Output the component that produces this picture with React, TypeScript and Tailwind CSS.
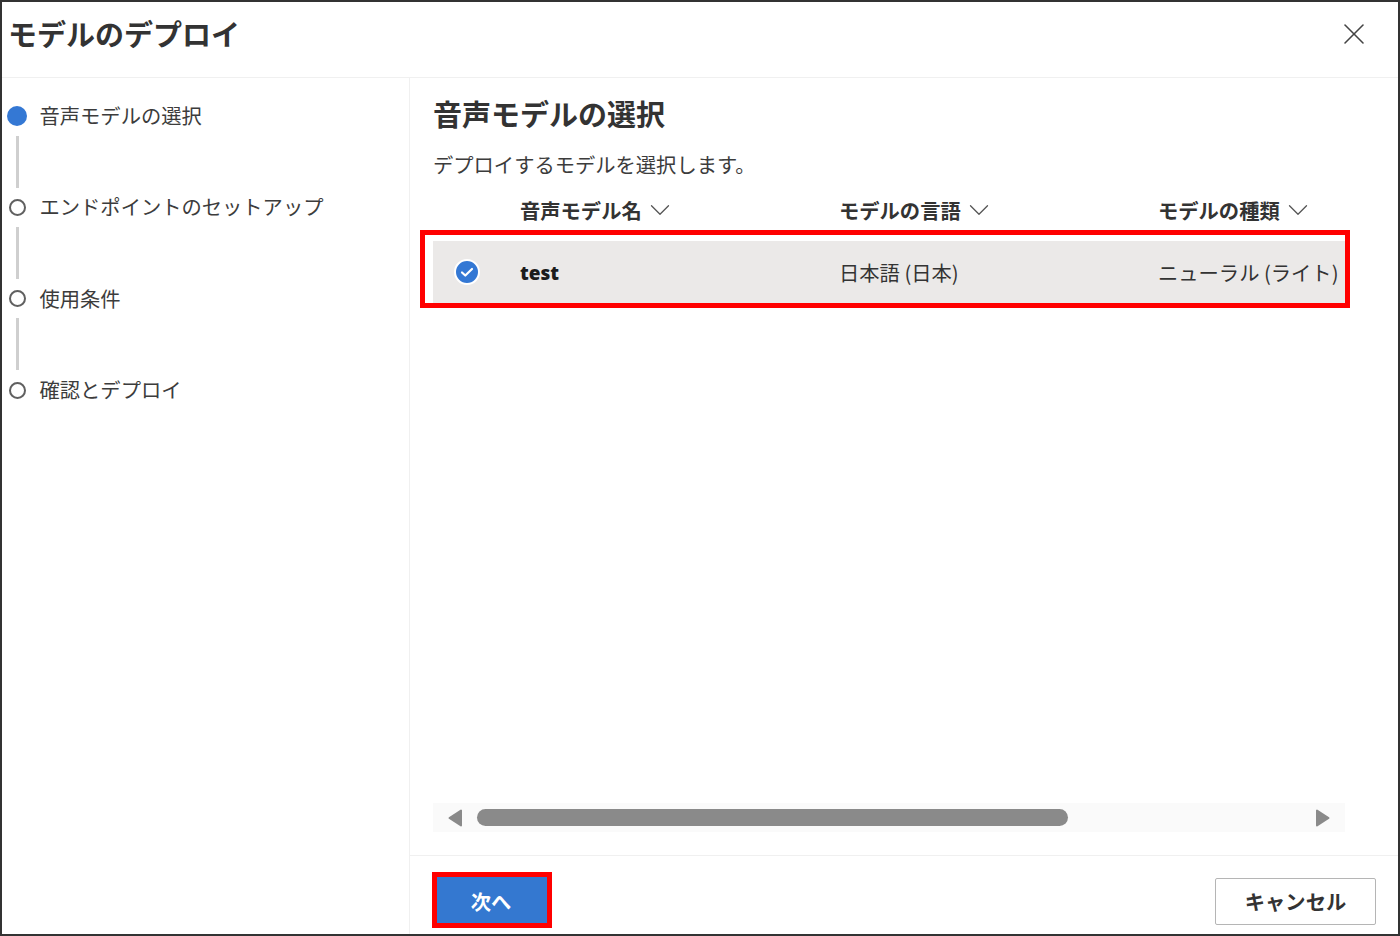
import React from 'react';
import { X, ChevronDown } from 'lucide-react';

const FONT = "font-['Noto_Sans_CJK_JP','Noto_Sans',sans-serif]";

const steps = [
  { label: '音声モデルの選択', active: true },
  { label: 'エンドポイントのセットアップ', active: false },
  { label: '使用条件', active: false },
  { label: '確認とデプロイ', active: false },
];

const columns = ['音声モデル名', 'モデルの言語', 'モデルの種類'];

const Stepper: React.FC = () => (
  <aside className="w-[408px] shrink-0 border-r border-[#f0f0f0] pl-[4px] pt-[25px]">
    {steps.map((step, i) => (
      <div key={step.label}>
        <div className="flex h-[26px] items-center">
          <div className="flex w-[22px] justify-center">
            {step.active ? (
              <span className="h-5 w-5 rounded-full bg-[#3478d4]" />
            ) : (
              <span className="h-[17px] w-[17px] rounded-full border-2 border-[#606060] bg-white" />
            )}
          </div>
          <span className="ml-[11.5px] -mt-[2px] text-[20.3px] leading-[26px] text-[#3c3c3c]">{step.label}</span>
        </div>
        {i < steps.length - 1 && (
          <div className="ml-[10px] flex h-[65.4px] items-center">
            <div className="h-[52px] w-[3px] bg-[#cfcfcf]" />
          </div>
        )}
      </div>
    ))}
  </aside>
);

const ModelTable: React.FC = () => (
  <div className="w-[912px]">
    <div className="grid h-[30px] grid-cols-[87px_319px_319px_187px] items-center">
      <div />
      {columns.map(col => (
        <div key={col} className="flex items-center">
          <span className="text-[20.3px] font-bold leading-[30px] text-[#333333]">{col}</span>
          <ChevronDown className="ml-[1px] h-[34px] w-[34px] text-[#555555]" strokeWidth={0.9} />
        </div>
      ))}
    </div>
    <div className="relative mt-[18px] grid h-[62px] grid-cols-[87px_319px_319px_187px] items-center bg-[#ebe9e8]">
      <div className="flex pl-[21px]">
        <span className="flex h-[26px] w-[26px] items-center justify-center rounded-full border-2 border-white bg-[#3478d4]">
          <svg viewBox="0 0 16 16" className="h-4 w-4" fill="none" stroke="white" strokeWidth={2.2} strokeLinecap="round" strokeLinejoin="round">
            <path d="M3 8.5l3.3 3L13 5" />
          </svg>
        </span>
      </div>
      <span className="mt-[2px] font-['Open_Sans',sans-serif] text-[19px] font-extrabold text-[#1c1c1c]">test</span>
      <span className="text-[20.3px] text-[#333333]">日本語 (日本)</span>
      <span className="whitespace-nowrap text-[20.3px] text-[#333333]">ニューラル (ライト)</span>
      {/* annotation frame around the selected row */}
      <div className="pointer-events-none absolute -bottom-[5px] -left-[13px] -right-[5px] -top-[11px] border-[5px] border-[#ff0000]" />
    </div>
  </div>
);

const ScrollBar: React.FC = () => (
  <div className="flex h-[29px] w-[912px] items-center bg-[#fafafa] pl-[15px] pr-[15px]">
    <svg viewBox="0 0 14 18" className="h-[18px] w-[14px] shrink-0" fill="#8a8a8a" stroke="#8a8a8a" strokeWidth={2} strokeLinejoin="round">
      <path d="M13 1.5v15L1.5 9z" />
    </svg>
    <div className="ml-[15px] h-[17px] w-[591px] rounded-full bg-[#8a8a8a]" />
    <svg viewBox="0 0 14 18" className="ml-auto h-[18px] w-[14px] shrink-0" fill="#8a8a8a" stroke="#8a8a8a" strokeWidth={2} strokeLinejoin="round">
      <path d="M1 1.5v15L12.5 9z" />
    </svg>
  </div>
);

const App: React.FC = () => {
  return (
    <div className={`flex h-[936px] w-[1400px] flex-col border-2 border-[#333333] bg-white ${FONT}`}>
      <header className="flex h-[76px] shrink-0 items-center justify-between border-b border-[#f0f0f0] pb-[12px] pl-[6px] pr-[26px]">
        <h1 className="text-[29px] font-bold leading-none text-[#333333]">モデルのデプロイ</h1>
        <X className="h-[36px] w-[36px] text-[#444444]" strokeWidth={1.05} />
      </header>
      <div className="flex min-h-0 flex-1">
        <Stepper />
        <main className="flex min-w-0 flex-1 flex-col">
          <div className="flex min-h-0 flex-1 flex-col pl-[23px] pt-[13px]">
            <h2 className="text-[29px] font-bold leading-[44px] text-[#333333]">音声モデルの選択</h2>
            <p className="mt-[15px] text-[20.3px] leading-[28px] text-[#3c3c3c]">デプロイするモデルを選択します。</p>
            <div className="mt-[15px]">
              <ModelTable />
            </div>
            <div className="mt-auto pb-[23px]">
              <ScrollBar />
            </div>
          </div>
          <footer className="flex h-[79px] shrink-0 items-start justify-between border-t border-[#f0f0f0] pl-[27px] pr-[22px] pt-[21px]">
            <button className="relative h-[46px] w-[110px] bg-[#3478d0] pr-[2px] pt-[2px] text-[20.3px] font-bold text-white">
              次へ
              <span className="pointer-events-none absolute -inset-[5px] border-[5px] border-[#ff0000]" />
            </button>
            <button className="mt-[1px] h-[47px] w-[161px] rounded-[2px] border border-[#b5b5b5] bg-white text-[20.3px] font-bold text-[#333333]">
              キャンセル
            </button>
          </footer>
        </main>
      </div>
    </div>
  );
};

export default App;
